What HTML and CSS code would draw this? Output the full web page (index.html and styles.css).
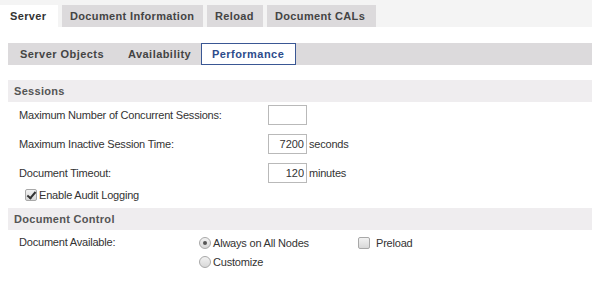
FILE: index.html
```html
<!DOCTYPE html>
<html lang="en">
<head>
  <meta charset="UTF-8">
  <title>Document Properties</title>
  <link rel="stylesheet" href="styles.css">
</head>
<body>
  <div class="tabs">
    <div class="tab active">Server</div>
    <div class="tab info">Document Information</div>
    <div class="tab reload">Reload</div>
    <div class="tab cals">Document CALs</div>
  </div>
  <div class="subtabs">
    <div class="subtab objects">Server Objects</div>
    <div class="subtab availability">Availability</div>
    <div class="subtab current">Performance</div>
  </div>

  <div class="section">
    <div class="section-head">Sessions</div>
    <div class="rows">
      <div class="row">
        <label class="row-label" for="maxsess">Maximum Number of Concurrent Sessions:</label>
        <input class="num" type="text" id="maxsess" value="">
      </div>
      <div class="row">
        <label class="row-label" for="inactive">Maximum Inactive Session Time:</label>
        <input class="num" type="text" id="inactive" value="7200">
        <span class="unit">seconds</span>
      </div>
      <div class="row">
        <label class="row-label" for="timeout">Document Timeout:</label>
        <input class="num" type="text" id="timeout" value="120">
        <span class="unit">minutes</span>
      </div>
      <label class="check-row">
        <input class="check" type="checkbox" checked>
        <span>Enable Audit Logging</span>
      </label>
    </div>
  </div>

  <div class="section">
    <div class="section-head">Document Control</div>
    <div class="avail">
      <div class="row-label">Document Available:</div>
      <div class="options">
        <label class="opt"><input class="radio" type="radio" name="avail" checked><span>Always on All Nodes</span></label>
        <label class="opt"><input class="radio" type="radio" name="avail"><span>Customize</span></label>
      </div>
      <label class="opt preload"><input class="check" type="checkbox"><span>Preload</span></label>
    </div>
  </div>
</body>
</html>
```

FILE: styles.css
```css
* {
  margin: 0;
  padding: 0;
  box-sizing: border-box;
}
body {
  background: #ffffff;
  font-family: "Liberation Sans", Arial, sans-serif;
  font-size: 11px;
  letter-spacing: -0.2px;
  color: #333333;
}
.tabs {
  display: flex;
  gap: 4px;
  height: 27px;
  padding-top: 5px;
  background: #f4f4f4;
}
.tab {
  display: flex;
  align-items: center;
  padding-left: 8px;
  background: #dcdadc;
  color: #444444;
  font-weight: bold;
  letter-spacing: 0.35px;
  white-space: nowrap;
}
.tab.active {
  width: 58px;
  padding-left: 10px;
  background: #ffffff;
  color: #333333;
}
.tab.info {
  width: 141px;
}
.tab.reload {
  width: 56px;
}
.tab.cals {
  width: 109px;
}
.subtabs {
  display: flex;
  height: 22px;
  margin: 16px 0 0 8px;
  background: #dcdadc;
}
.subtab {
  display: flex;
  align-items: center;
  padding-left: 12px;
  color: #444444;
  font-weight: bold;
  letter-spacing: 0.45px;
  white-space: nowrap;
}
.subtab.objects {
  width: 108px;
}
.subtab.availability {
  width: 85px;
}
.subtab.current {
  width: 95px;
  padding-left: 10px;
  background: #ffffff;
  border: 1px solid #3a5794;
  color: #2d4c8c;
}
.section {
  margin: 15px 0 0 8px;
}
.section + .section {
  margin-top: 6px;
}
.section-head {
  height: 22px;
  line-height: 22px;
  padding-left: 6px;
  background: #efedef;
  color: #555555;
  font-weight: bold;
  letter-spacing: 0.3px;
}
.rows {
  padding: 3px 0 0 11px;
}
.row {
  display: flex;
  align-items: center;
  height: 20px;
  margin-bottom: 9px;
}
.row-label {
  width: 249px;
}
.num {
  width: 39px;
  height: 20px;
  padding: 0 2px;
  border: 1px solid #b9b9b9;
  text-align: right;
  font-family: inherit;
  font-size: 11px;
  color: #333333;
  outline: 0;
}
.unit {
  margin-left: 2px;
}
.check-row {
  display: flex;
  align-items: center;
  margin: -4px 0 0 6px;
  height: 14px;
}
.check,
.radio {
  appearance: none;
  -webkit-appearance: none;
  width: 12px;
  height: 12px;
  margin-right: 2px;
  border: 1px solid #a8a8a8;
  background: linear-gradient(#f2f2f2, #d8d8d8);
  position: relative;
  flex: none;
}
.check {
  border-radius: 2px;
}
.check:checked::after {
  content: "";
  position: absolute;
  left: 3px;
  top: 0px;
  width: 3px;
  height: 7px;
  border: solid #333333;
  border-width: 0 2px 2px 0;
  transform: rotate(40deg);
}
.radio {
  border-radius: 50%;
}
.radio:checked::after {
  content: "";
  position: absolute;
  left: 3px;
  top: 3px;
  width: 4px;
  height: 4px;
  border-radius: 50%;
  background: #555555;
}
.avail {
  display: flex;
  padding: 7px 0 0 11px;
}
.avail .row-label {
  width: 180px;
  margin-top: -1px;
}
.options {
  display: flex;
  flex-direction: column;
  gap: 7px;
  width: 159px;
}
.opt {
  display: flex;
  align-items: center;
  height: 12px;
  line-height: 12px;
}
.preload .check {
  margin-right: 6px;
}
```
